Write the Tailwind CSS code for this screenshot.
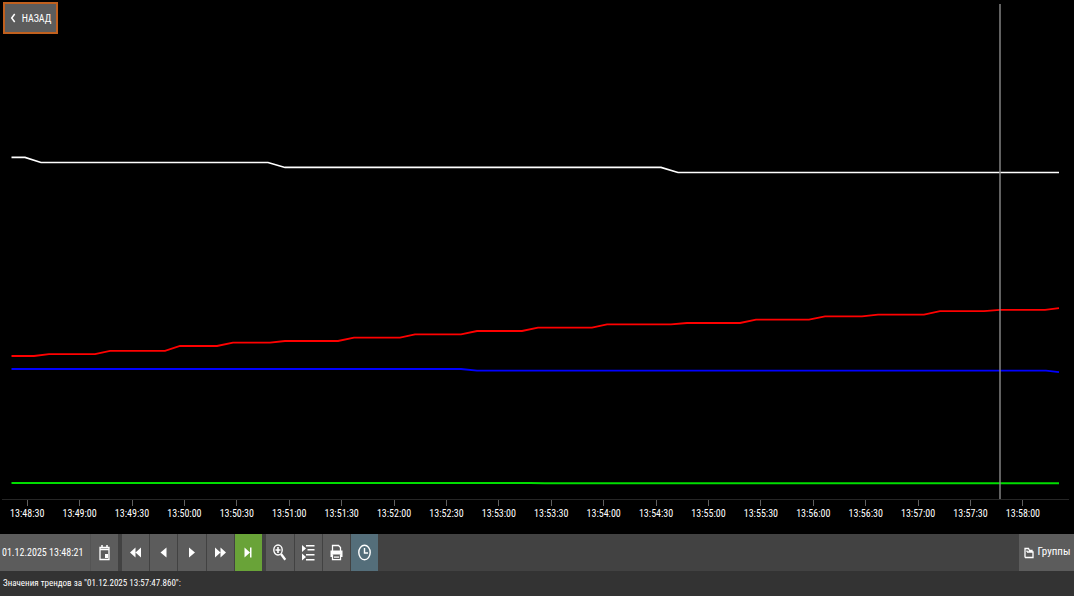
<!DOCTYPE html>
<html lang="ru">
<head>
    <meta charset="UTF-8">
    <meta name="viewport" content="width=device-width, initial-scale=1.0">
    <title>Тренды</title>
    <script src="https://cdn.jsdelivr.net/npm/@tailwindcss/browser@4"></script>
</head>
<body class="h-screen flex flex-col overflow-hidden bg-black text-white font-['Roboto_Condensed',Roboto,sans-serif]">
    <!-- График -->
    <main class="relative flex-1 min-h-0 flex flex-col">
        <button type="button" class="absolute left-[3px] top-[2px] z-10 w-[55px] h-8 flex items-center justify-center gap-1 bg-[#5c5c5c] border-2 border-[#c0601e] text-[10px]">
            <svg class="w-2 h-3" viewBox="0 0 8 12" fill="none" stroke="currentColor" stroke-width="1.5"><path d="M4.7 2L1.700 6l3 4"/></svg>
            НАЗАД
        </button>

        <svg class="w-full flex-1 min-h-0" viewBox="0 0 1074 499" preserveAspectRatio="none" fill="none" stroke-width="1.8" role="img" aria-label="Тренды">
            <polyline stroke="#fff" stroke-width="1.6" points="11.5,157.4 25,157.4 41,162.5 268,162.5 285,167.4 661,167.4 678,172.5 1059,172.5"/>
            <polyline stroke="#f00" points="11.5,356 34,356 49,354.2 95,354.2 110,350.8 165,350.8 180,346 217,346 233,342.7 270,342.7 285,341 338,341 354,337.6 400,337.6 415,334.3 461,334.3 477,331 522,331 538,327.7 592,327.7 607,324.4 671,324.4 687,323 740,323 756,319.6 809,319.6 825,316.4 862,316.4 878,314.6 924,314.6 940,311.2 984,311.2 1000,309.8 1045,309.8 1059,308.2"/>
            <polyline stroke="#00f" points="11.5,369 461,369 477,370.6 1046,370.6 1059,372.2"/>
            <polyline stroke="#0d0" stroke-width="2" points="11.5,483 530,483 545,483.2 1059,483.2"/>
            <path stroke="#888" stroke-opacity=".8" d="M1000 4V499"/>
        </svg>

        <!-- Ось времени -->
        <div class="h-px ml-[2px] mr-[5px] bg-[#262626]"></div>
        <ol id="axis" class="flex h-[34px] ml-px mr-[25px] text-[10px] leading-4"></ol>
    </main>

    <!-- Панель инструментов -->
    <nav class="h-[37px] flex bg-[#424242]" aria-label="Панель инструментов">
        <button type="button" class="w-[91px] pl-[2px] text-left text-[10px] whitespace-nowrap bg-[#5c5c5c] border-r border-[#545454]">01.12.2025 13:48:21</button>
        <button type="button" aria-label="Выбрать дату" class="w-[27px] mr-1 flex items-center justify-center bg-[#5c5c5c]">
            <svg class="w-4 h-[18px]" viewBox="0 0 16 18" fill="none" stroke="currentColor"><path d="M3 3.500h9v12H3zM3 5.500h9" stroke-width="1.3"/><path d="M5 1v3M10 1v3" stroke-width="1.5"/><path d="M8 10h3v4H8z" fill="currentColor" stroke="none"/></svg>
        </button>
        <div class="flex gap-px">
            <button type="button" aria-label="Быстро назад" class="w-[27px] flex items-center justify-center bg-[#5c5c5c]">
                <svg class="w-4 h-[18px]" viewBox="0 0 16 18" fill="currentColor"><path d="M7.500 3.500v10L2 8.500zM13 3.500v10L7.500 8.500z"/></svg>
            </button>
            <button type="button" aria-label="Назад" class="w-[27px] flex items-center justify-center bg-[#5c5c5c]">
                <svg class="w-4 h-[18px]" viewBox="0 0 16 18" fill="currentColor"><path d="M10.500 3.500v10L4.500 8.500z"/></svg>
            </button>
            <button type="button" aria-label="Вперёд" class="w-[28px] flex items-center justify-center bg-[#5c5c5c]">
                <svg class="w-4 h-[18px]" viewBox="0 0 16 18" fill="currentColor"><path d="M5 3.500v10l6-5z"/></svg>
            </button>
            <button type="button" aria-label="Быстро вперёд" class="w-[27px] flex items-center justify-center bg-[#5c5c5c]">
                <svg class="w-4 h-[18px]" viewBox="0 0 16 18" fill="currentColor"><path d="M2 3.500v10l5.500-5zM7.500 3.500v10l5.500-5z"/></svg>
            </button>
            <button type="button" aria-label="В конец" aria-pressed="true" class="w-[27px] flex items-center justify-center bg-[#69a338]">
                <svg class="w-4 h-[18px]" viewBox="0 0 16 18" fill="currentColor"><path d="M3.500 3.500v10l5.500-5zM9 3.500h1.500v10H9z"/></svg>
            </button>
        </div>
        <div class="flex gap-px ml-1">
            <button type="button" aria-label="Увеличить" class="w-[28px] flex items-center justify-center bg-[#5c5c5c]">
                <svg class="w-4 h-[18px]" viewBox="0 0 16 18" fill="none" stroke="currentColor"><ellipse cx="6" cy="6" rx="4.200" ry="5" stroke-width="1.400"/><path d="M6 3v6M3.500 6h5" stroke-width="1.600"/><path d="M9 10l4.300 5.700" stroke-width="2.300"/></svg>
            </button>
            <button type="button" aria-label="Список трендов" class="w-[27px] flex items-center justify-center bg-[#5c5c5c]">
                <svg class="w-4 h-[18px]" viewBox="0 0 16 18" fill="currentColor"><path d="M1 1v7l4-3.500zM1 9.500v7l4-3.500zM5 1h8.500v1.500H5zM6.500 5h7v1.500h-7zM5 10h8.500v1.500H5zM5 15h8.500v1.500H5z"/></svg>
            </button>
            <button type="button" aria-label="Печать" class="w-[27px] flex items-center justify-center bg-[#5c5c5c]">
                <svg class="w-4 h-[18px]" viewBox="0 0 16 18" fill="none" stroke="currentColor" stroke-width="1.3"><path d="M3.500 7V1.500h6l2 2V7"/><path d="M1.500 6.500h12v6.500h-2v-2.500h-8v2.500h-2z" fill="currentColor" stroke="none"/><path d="M3.500 10.500v5.200h8v-5.200M5 13.200h5"/></svg>
            </button>
            <button type="button" aria-label="Время" aria-pressed="true" class="w-[27px] flex items-center justify-center bg-[#546e7a]">
                <svg class="w-4 h-[18px]" viewBox="0 0 16 18" fill="none" stroke="currentColor" stroke-width="1.400"><ellipse cx="7.500" cy="8.500" rx="5.700" ry="7.200"/><path d="M7.500 4v5H11"/></svg>
            </button>
        </div>
        <button type="button" class="ml-auto w-[55px] pl-px flex items-center justify-center gap-1 bg-[#5c5c5c] text-[11px]">
            <svg class="w-[10px] h-3 shrink-0" viewBox="0 0 10 12" fill="none" stroke="currentColor" stroke-width="1.300"><path d="M1 10.500V1.500h3.500l1 2H8v1.500M3 5h6v5.500H1M3 5V3.500"/></svg>
            Группы
        </button>
    </nav>

    <footer class="h-[25px] pl-[3px] bg-[#333] text-[9px] leading-6 whitespace-nowrap">Значения трендов за "01.12.2025 13:57:47.860":</footer>

    <script>
        // подписи оси: шаг 30 секунд
        const axis = document.getElementById('axis');
        const start = 13 * 3600 + 48 * 60 + 30;
        for (let i = 0; i < 20; i++) {
            const t = start + i * 30;
            const label = [t / 3600, t / 60 % 60, t % 60].map(v => String(Math.floor(v)).padStart(2, '0')).join(':');
            axis.insertAdjacentHTML('beforeend',
                `<li class="flex-1 min-w-0 flex flex-col items-center"><span class="w-px h-[6px] bg-[#606060]"></span>${label}</li>`);
        }
    </script>
</body>
</html>
